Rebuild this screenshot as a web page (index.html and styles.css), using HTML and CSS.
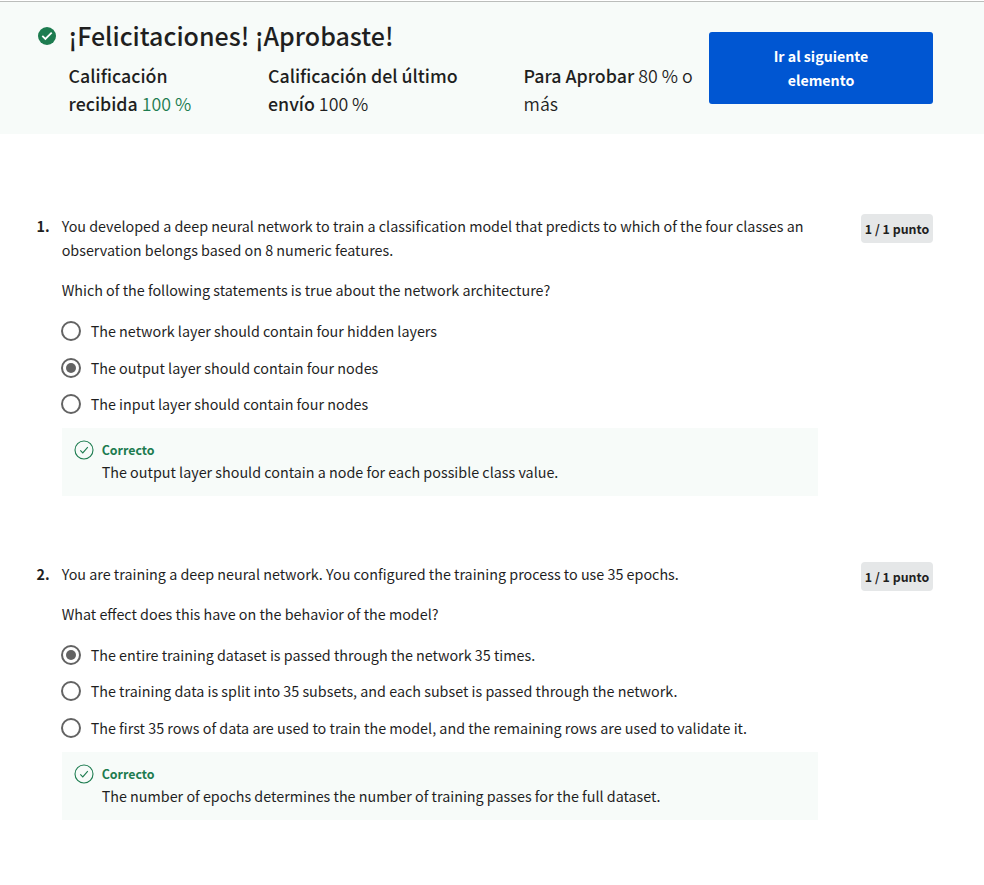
FILE: index.html
```
<!DOCTYPE html>
<html lang="es">
<head>
<meta charset="utf-8">
<title>Resultados</title>
<link rel="stylesheet" href="styles.css">
</head>
<body>
<header class="banner">
  <svg class="banner-icon" viewBox="0 0 18 18"><circle cx="9" cy="9" r="9" fill="#1d7c50"/><path d="M4.3 8.9l3.1 3.1 6.3-6.3" fill="none" stroke="#fff" stroke-width="1.8"/></svg>
  <div class="summary">
    <h1>¡Felicitaciones! ¡Aprobaste!</h1>
    <div class="stats">
      <p class="s1"><b>Calificación<br>recibida</b> <span class="green">100 %</span></p>
      <p class="s2"><b>Calificación del último<br>envío</b> 100 %</p>
      <p class="s3"><b>Para Aprobar</b> 80 % o<br>más</p>
    </div>
  </div>
  <button class="next">Ir al siguiente<br>elemento</button>
</header>
<main>
  <section class="question">
    <div class="num">1.</div>
    <div class="content">
      <p class="prompt">You developed a deep neural network to train a classification model that predicts to which of the four classes an<br>observation belongs based on 8 numeric features.</p>
      <p class="prompt">Which of the following statements is true about the network architecture?</p>
      <ul>
        <li><i class="radio"></i><span>The network layer should contain four hidden layers</span></li>
        <li><i class="radio on"></i><span>The output layer should contain four nodes</span></li>
        <li><i class="radio"></i><span>The input layer should contain four nodes</span></li>
      </ul>
      <div class="feedback">
        <svg viewBox="0 0 20 20"><circle cx="10" cy="10" r="9" /><path d="M6.3 10.3l2.5 2.6 5-5.8"/></svg>
        <div><strong>Correcto</strong><p>The output layer should contain a node for each possible class value.</p></div>
      </div>
    </div>
    <div class="points">1 / 1 punto</div>
  </section>
  <section class="question second">
    <div class="num">2.</div>
    <div class="content">
      <p class="prompt">You are training a deep neural network. You configured the training process to use 35 epochs.</p>
      <p class="prompt">What effect does this have on the behavior of the model?</p>
      <ul>
        <li><i class="radio on"></i><span>The entire training dataset is passed through the network 35 times.</span></li>
        <li><i class="radio"></i><span>The training data is split into 35 subsets, and each subset is passed through the network.</span></li>
        <li><i class="radio"></i><span>The first 35 rows of data are used to train the model, and the remaining rows are used to validate it.</span></li>
      </ul>
      <div class="feedback">
        <svg viewBox="0 0 20 20"><circle cx="10" cy="10" r="9" /><path d="M6.3 10.3l2.5 2.6 5-5.8"/></svg>
        <div><strong>Correcto</strong><p>The number of epochs determines the number of training passes for the full dataset.</p></div>
      </div>
    </div>
    <div class="points">1 / 1 punto</div>
  </section>
</main>
</body>
</html>
```
FILE: styles.css
```
* { box-sizing: border-box; margin: 0; padding: 0; }
body { background: #fff; color: #1f1f1f; font: 14.33px/24px "Noto Sans CJK SC", "Noto Sans", sans-serif; white-space: nowrap; overflow: hidden; }
.banner { display: flex; background: #f7fbf9; border-top: 1px solid #bbbdbb; padding: 0 51px 0 38px; margin-top: 1px; height: 133px; }
.banner-icon { width: 18px; height: 18px; margin-top: 25px; flex: none; }
.summary { margin-left: 12.6px; width: 640.4px; flex: none; }
h1 { font-size: 25px; line-height: 36px; font-weight: 500; margin-top: 15px; }
.stats { display: flex; font-size: 17.8px; line-height: 28px; margin-top: 8px; font-weight: 350; }
.stats b { font-weight: 500; }
.s1 { width: 199.4px; }
.s2 { width: 255.6px; }
.green { color: #1d7c50; }
.next { width: 224px; height: 72px; margin-top: 30px; border: 0; border-radius: 3px; background: #0056d2; color: #fff; font: 700 14.2px/24px "Noto Sans CJK SC", sans-serif; flex: none; }
main { padding: 79px 51px 0 36.5px; }
.question { display: flex; height: 348px; padding-top: 1px; }
.num { width: 25.2px; font-weight: 700; }
.content { width: 756px; }
.prompt { margin-bottom: 16px; }
ul { list-style: none; margin-top: -5px; }
li { display: flex; align-items: center; height: 36.5px; }
.second li:first-child { height: 36px; }
.second li:last-child { height: 37px; }
.radio { width: 20px; height: 20px; border: 2px solid #636363; border-radius: 50%; margin: 0 9.7px 0 -0.7px; flex: none; display: grid; place-items: center; }
.on::after { content: ""; width: 10px; height: 10px; border-radius: 50%; background: #636363; }
.feedback { display: flex; height: 68px; background: #f7fbf9; padding: 12.5px 12px 0; margin-top: 5px; }
.feedback svg { width: 20px; height: 20px; margin-right: 8px; fill: none; stroke: #1d7c50; stroke-width: 1.1; }
.feedback strong { display: block; color: #1d7c50; font-size: 12.4px; line-height: 20px; }
.points { width: 72px; height: 29px; margin-left: auto; background: #e5e7e8; border-radius: 4px; font-size: 12.4px; line-height: 31px; font-weight: 700; text-align: center; }
```
